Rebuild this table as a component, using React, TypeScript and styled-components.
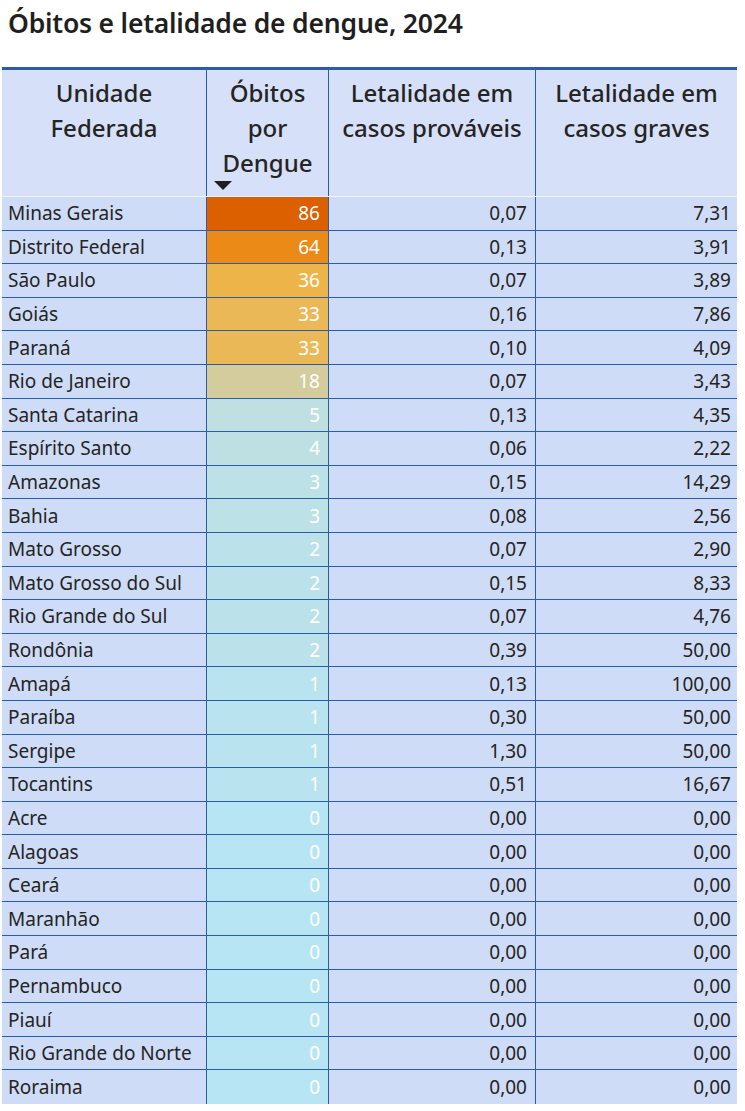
import React from 'react';
import styled, { createGlobalStyle } from 'styled-components';

const GlobalStyle = createGlobalStyle`
  body {
    margin: 0;
    background: #ffffff;
    font-family: 'Noto Sans', 'Open Sans', sans-serif;
    color: #252423;
  }
`;

const Page = styled.div`
  width: 745px;
  padding-top: 3px;
`;

const Title = styled.h1`
  margin: 0 0 0 8px;
  height: 64px;
  font-size: 26.5px;
  font-weight: 600;
  line-height: 40px;
  letter-spacing: -0.2px;
  color: #1f1f1f;
`;

const Table = styled.div`
  margin-left: 2px;
  width: 735px;
  border-top: 3px solid #2a5ca8;
`;

const COLS = '205px 122px 207px 201px';

const HeaderRow = styled.div`
  display: grid;
  grid-template-columns: ${COLS};
  height: 126px;
  background: #d6e0f8;
  border-bottom: 1px solid #eef3fd;
`;

const HeaderCell = styled.div<{ $last?: boolean }>`
  display: flex;
  flex-direction: column;
  align-items: center;
  padding-top: 5px;
  border-right: ${(p) => (p.$last ? 'none' : '1px solid #2a5ca8')};
  font-size: 24px;
  font-weight: 500;
  line-height: 35px;
  text-align: center;
  white-space: nowrap;
  color: #252423;
`;

const SortArrow = styled.svg`
  align-self: flex-start;
  margin-left: 7px;
  margin-top: 1px;
`;

const Row = styled.div<{ $last?: boolean }>`
  display: grid;
  grid-template-columns: ${COLS};
  height: 33.6px;
  box-sizing: border-box;
  background: #cfdcf7;
  border-bottom: ${(p) => (p.$last ? 'none' : '1px solid #2a5ca8')};
`;

const Cell = styled.div<{ $align?: 'left' | 'right'; $last?: boolean; $pad?: number }>`
  display: flex;
  align-items: center;
  justify-content: ${(p) => (p.$align === 'right' ? 'flex-end' : 'flex-start')};
  padding: 0 ${(p) => p.$pad ?? 8}px;
  border-right: ${(p) => (p.$last ? 'none' : '1px solid #2a5ca8')};
  font-size: 19px;
  color: #252423;
  white-space: nowrap;
  overflow: hidden;
`;

const ScaleCell = styled(Cell)<{ $bg: string }>`
  background: ${(p) => p.$bg};
  color: #ffffff;
`;

const scale: Record<number, string> = {
  86: '#dc6000',
  64: '#ec8a17',
  36: '#edb549',
  33: '#ebb857',
  18: '#d5cc9e',
  5: '#c0dfe0',
  4: '#bee0e3',
  3: '#bce1e7',
  2: '#bbe2ea',
  1: '#b9e3ee',
  0: '#b8e5f4',
};

const rows: [string, number, string, string][] = [
  ['Minas Gerais', 86, '0,07', '7,31'],
  ['Distrito Federal', 64, '0,13', '3,91'],
  ['São Paulo', 36, '0,07', '3,89'],
  ['Goiás', 33, '0,16', '7,86'],
  ['Paraná', 33, '0,10', '4,09'],
  ['Rio de Janeiro', 18, '0,07', '3,43'],
  ['Santa Catarina', 5, '0,13', '4,35'],
  ['Espírito Santo', 4, '0,06', '2,22'],
  ['Amazonas', 3, '0,15', '14,29'],
  ['Bahia', 3, '0,08', '2,56'],
  ['Mato Grosso', 2, '0,07', '2,90'],
  ['Mato Grosso do Sul', 2, '0,15', '8,33'],
  ['Rio Grande do Sul', 2, '0,07', '4,76'],
  ['Rondônia', 2, '0,39', '50,00'],
  ['Amapá', 1, '0,13', '100,00'],
  ['Paraíba', 1, '0,30', '50,00'],
  ['Sergipe', 1, '1,30', '50,00'],
  ['Tocantins', 1, '0,51', '16,67'],
  ['Acre', 0, '0,00', '0,00'],
  ['Alagoas', 0, '0,00', '0,00'],
  ['Ceará', 0, '0,00', '0,00'],
  ['Maranhão', 0, '0,00', '0,00'],
  ['Pará', 0, '0,00', '0,00'],
  ['Pernambuco', 0, '0,00', '0,00'],
  ['Piauí', 0, '0,00', '0,00'],
  ['Rio Grande do Norte', 0, '0,00', '0,00'],
  ['Roraima', 0, '0,00', '0,00'],
];

const App: React.FC = () => {
  return (
    <Page>
      <GlobalStyle />
      <Title>Óbitos e letalidade de dengue, 2024</Title>
      <Table>
        <HeaderRow>
          <HeaderCell>
            <span>Unidade</span>
            <span>Federada</span>
          </HeaderCell>
          <HeaderCell>
            <span>Óbitos</span>
            <span>por</span>
            <span>Dengue</span>
            <SortArrow width="18" height="9" viewBox="0 0 18 9">
              <polygon points="0,0 18,0 9,9" fill="#1f1f1f" />
            </SortArrow>
          </HeaderCell>
          <HeaderCell>
            <span>Letalidade em</span>
            <span>casos prováveis</span>
          </HeaderCell>
          <HeaderCell $last>
            <span>Letalidade em</span>
            <span>casos graves</span>
          </HeaderCell>
        </HeaderRow>
        {rows.map(([uf, obitos, prov, graves], i) => (
          <Row key={uf} $last={i === rows.length - 1}>
            <Cell $pad={6}>{uf}</Cell>
            <ScaleCell $align="right" $bg={scale[obitos]}>
              {obitos}
            </ScaleCell>
            <Cell $align="right">{prov}</Cell>
            <Cell $align="right" $last $pad={6}>
              {graves}
            </Cell>
          </Row>
        ))}
      </Table>
    </Page>
  );
};

export default App;
